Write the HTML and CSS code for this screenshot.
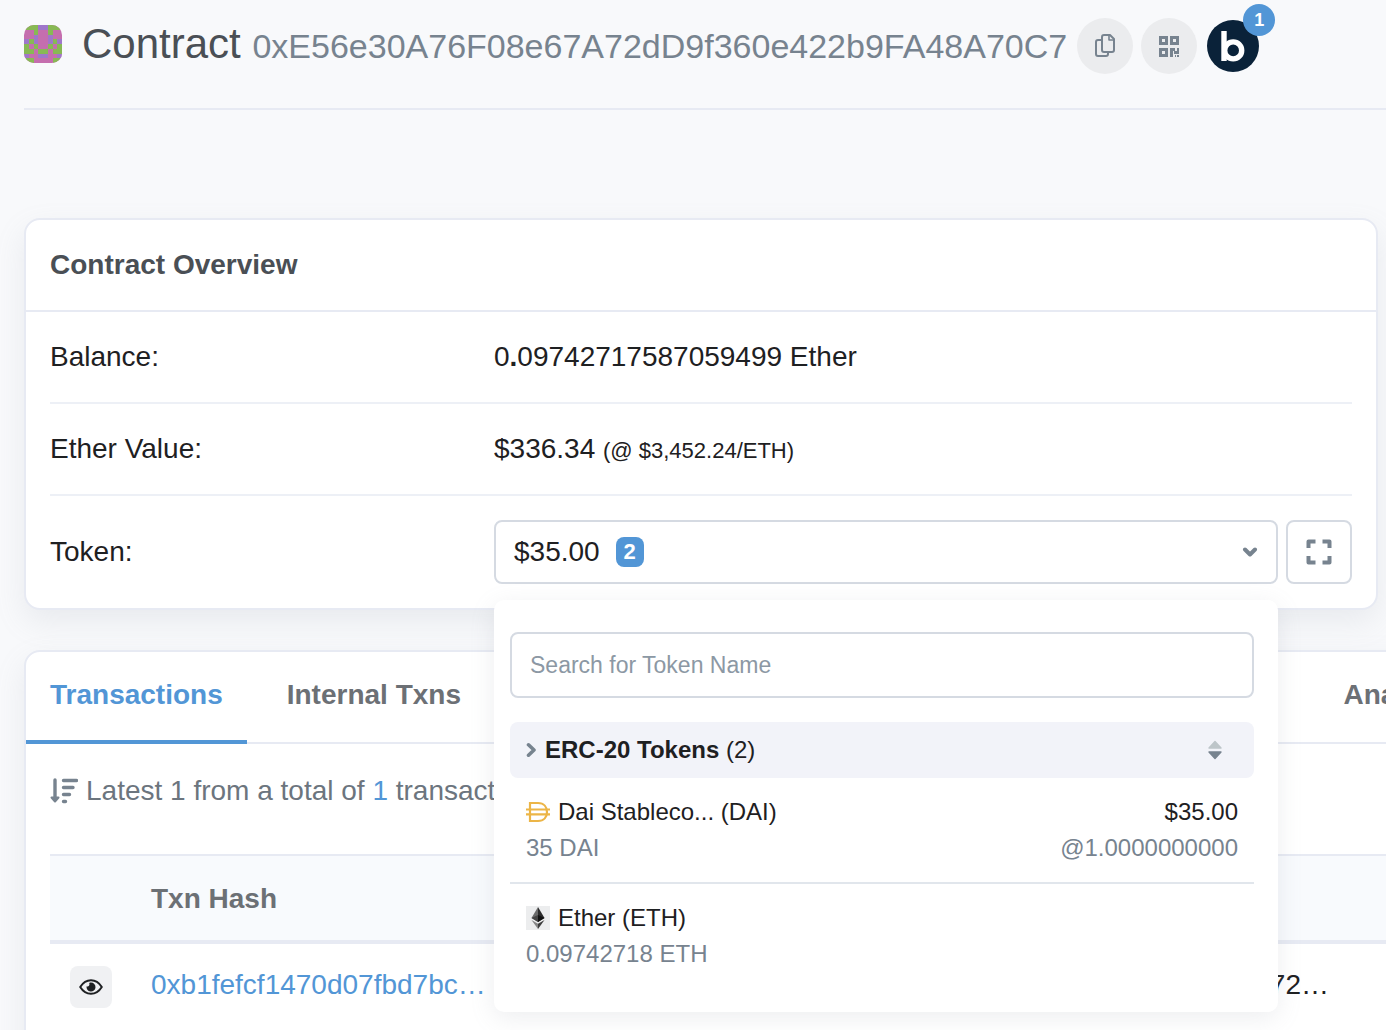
FILE: index.html
```
<!DOCTYPE html>
<html lang="en">
<head>
<meta charset="utf-8">
<meta name="viewport" content="width=device-width, initial-scale=1">
<title>Contract Address</title>
<link rel="stylesheet" href="styles.css">
</head>
<body>
<main class="page">
  <header class="page-header">
    <div class="title-group">
      <svg class="avatar" viewBox="0 0 8 8" shape-rendering="crispEdges" aria-hidden="true">
        <rect width="8" height="8" fill="#c56eae"/>
        <path fill="#88b954" d="M0 0h3v1H0zM5 0h3v1H5zM2 1h1v1H2zM5 1h1v1H5zM1 3h1v1H1zM6 3h1v1H6zM0 4h1v1H0zM2 4h1v1H2zM5 4h1v1H5zM7 4h1v1H7zM0 5h2v1H0zM3 5h2v1H3zM6 5h2v1H6zM0 7h2v1H0zM6 7h2v1H6z"/>
        <path fill="#9f77ca" d="M3 0h2v1H3zM2 2h1v2H2zM5 2h1v2H5zM0 3h1v1H0zM7 3h1v1H7zM0 6h1v1H0zM7 6h1v1H7zM3 6h2v1H3z"/>
      </svg>
      <h1 class="title">Contract <span class="address">0xE56e30A76F08e67A72dD9f360e422b9FA48A70C7</span></h1>
    </div>
    <div class="header-actions">
      <button class="round-btn" type="button" aria-label="Copy address">
        <svg width="20" height="24" viewBox="0 0 20 24" fill="none" stroke="#77838f" stroke-width="2" stroke-linejoin="round">
          <path d="M6 6H3a2 2 0 0 0-2 2v12a2 2 0 0 0 2 2h8a2 2 0 0 0 2-2v-2"/>
          <path d="M9 1h6l4 4v11a2 2 0 0 1-2 2H9a2 2 0 0 1-2-2V3a2 2 0 0 1 2-2z"/>
          <path d="M14 1v5h5" stroke-width="1.6"/>
        </svg>
      </button>
      <button class="round-btn" type="button" aria-label="Show QR code">
        <svg width="20" height="21" viewBox="0 0 20 21" fill="#77838f">
          <path fill-rule="evenodd" d="M0 0h9v9H0zM3 3v3h3V3zM11 0h9v9h-9zM14 3v3h3V3zM0 12h9v9H0zM3 15v3h3v-3z"/>
          <path d="M11 12h5v3h2v-3h2v6h-5v-3h-1v6h-3zM16 19h1v2h-1zM18 19h2v2h-2z"/>
        </svg>
      </button>
      <a class="brand" href="#" aria-label="Blockscan">
        <svg width="52" height="52" viewBox="0 0 52 52">
          <circle cx="26" cy="26" r="26" fill="#0a2239"/>
          <path d="M17 11v30" stroke="#fff" stroke-width="5.4"/>
          <circle cx="26.200" cy="30.400" r="8.500" fill="none" stroke="#fff" stroke-width="5.4"/>
        </svg>
        <span class="brand-count">1</span>
      </a>
    </div>
  </header>

  <section class="card overview">
    <h2 class="card-title">Contract Overview</h2>
    <dl class="facts">
      <div class="fact">
        <dt>Balance:</dt>
        <dd>0<b>.</b>09742717587059499 Ether</dd>
      </div>
      <div class="fact">
        <dt>Ether Value:</dt>
        <dd>$336.34 <small>(@ $3,452.24/ETH)</small></dd>
      </div>
      <div class="fact">
        <dt>Token:</dt>
        <dd class="token-controls">
          <div class="token-picker">
            <button class="token-btn" type="button" aria-haspopup="true" aria-expanded="true">
              <span>$35.00</span>
              <span class="badge">2</span>
              <svg class="caret" width="16" height="10" viewBox="0 0 16 10" fill="none" stroke="#77838f" stroke-width="4" stroke-linecap="round" stroke-linejoin="round"><path d="M3 2.500l5 5 5-5"/></svg>
            </button>
            <div class="token-menu">
              <input class="search" type="text" placeholder="Search for Token Name" aria-label="Search for Token Name">
              <div class="group-head">
                <svg width="11" height="16" viewBox="0 0 11 16" fill="none" stroke="#77838f" stroke-width="3.6" stroke-linecap="round" stroke-linejoin="round"><path d="M2.500 2.800l5.500 5.200-5.500 5.200"/></svg>
                <span><strong>ERC-20 Tokens</strong> (2)</span>
                <button class="sort-btn" type="button" aria-label="Sort tokens">
                  <svg width="14" height="20" viewBox="0 0 14 20" stroke-linejoin="round" stroke-width="1.4"><path d="M7 1.500l6 6.500H1z" fill="#bdc5c9" stroke="#bdc5c9"/><path d="M7 18.500l6-6.500H1z" fill="#77838f" stroke="#77838f"/></svg>
                </button>
              </div>
              <ul class="tokens">
                <li>
                  <a class="token" href="#">
                    <span class="token-line">
                      <span class="token-name">
                        <svg width="24" height="24" viewBox="0 0 24 24" fill="none" stroke="#ecb547" stroke-width="2.2"><path d="M4 3h8c6 0 9 4 9 9s-3 9-9 9H4z"/><path d="M0 9.500h24M0 14.300h24"/></svg>
                        Dai Stableco... (DAI)
                      </span>
                      <span>$35.00</span>
                    </span>
                    <span class="token-line muted"><span>35 DAI</span><span>@1.0000000000</span></span>
                  </a>
                </li>
                <li>
                  <a class="token" href="#">
                    <span class="token-line">
                      <span class="token-name">
                        <svg width="24" height="24" viewBox="0 0 24 24"><rect width="24" height="24" fill="#ecedee"/><path d="M12 1L5.500 12 12 16z" fill="#6b6b6b"/><path d="M12 1l6.500 11L12 16z" fill="#2b2b2b"/><path d="M12 9l-6.500 3L12 16z" fill="#444"/><path d="M12 9l6.500 3L12 16z" fill="#111"/><path d="M5.500 14L12 17.700V23z" fill="#858585"/><path d="M18.500 14L12 17.700V23z" fill="#3d3d3d"/></svg>
                        Ether (ETH)
                      </span>
                    </span>
                    <span class="token-line muted"><span>0.09742718 ETH</span></span>
                  </a>
                </li>
              </ul>
            </div>
          </div>
          <button class="expand-btn" type="button" aria-label="View all holdings">
            <svg width="26" height="26" viewBox="0 0 26 26" fill="none" stroke="#77838f" stroke-width="4" stroke-linejoin="round"><path d="M2.500 9V2.500h7M16.500 2.500h7V9M23.500 17v6.500h-7M9.500 23.500h-7V17"/></svg>
          </button>
        </dd>
      </div>
    </dl>
  </section>

  <section class="card activity">
    <nav class="tabs">
      <a class="tab active" href="#">Transactions</a>
      <a class="tab" href="#">Internal Txns</a>
      <a class="tab last" href="#">Analytics</a>
    </nav>
    <div class="activity-body">
      <p class="summary">
        <svg width="28" height="26" viewBox="0 0 28 26" fill="none" stroke="#77838f" stroke-width="3.4" stroke-linecap="round"><path d="M5 2v18"/><path d="M1.500 19.500h7L5 23.500z" fill="#77838f" stroke-width="2" stroke-linejoin="round"/><path d="M13.500 2.500h13M13.500 9.500h9.500M13.500 16.500h6M13.500 23.500h2"/></svg>
        <span>Latest 1 from a total of <a href="#">1</a> transactions</span>
      </p>
      <table class="txns">
        <thead>
          <tr><th class="col-view"></th><th class="col-hash">Txn Hash</th><th class="col-from"></th><th></th></tr>
        </thead>
        <tbody>
          <tr>
            <td class="col-view"><button class="eye-btn" type="button" aria-label="Preview transaction">
              <svg width="24" height="16" viewBox="0 0 24 16"><path d="M1.200 8C4 3.500 7.500 1.200 12 1.200S20 3.500 22.800 8C20 12.500 16.500 14.800 12 14.800S4 12.500 1.200 8z" fill="none" stroke="#1e2022" stroke-width="2" stroke-linejoin="round"/><path d="M12 3.600a4.500 4.500 0 1 1-4.400 3.600c1.600.9 3.600-.9 2.600-3.200.6-.3 1.200-.4 1.800-.4z" fill="#1e2022"/></svg>
            </button></td>
            <td><a href="#">0xb1fefcf1470d07fbd7bc…</a></td>
            <td class="col-from">0x31a6ab72…</td>
            <td></td>
          </tr>
        </tbody>
      </table>
    </div>
  </section>
</main>
</body>
</html>
```
FILE: styles.css
```
* { box-sizing: border-box; }

body {
  margin: 0;
  background: #f8f9fb;
  color: #1e2022;
  font: 28px/42px "Liberation Sans", Arial, sans-serif;
}

button, input { font: inherit; color: inherit; margin: 0; }
button { padding: 0; border: 0; background: none; cursor: pointer; }
a { color: #5296d6; text-decoration: none; }
svg { display: block; flex: none; }

.page {
  min-height: 100vh;
  padding: 0 8px 0 24px;
  overflow: hidden;
}

/* Header */
.page-header {
  display: flex;
  align-items: flex-start;
  gap: 10px;
  margin-right: -8px;
  padding: 18px 0 34px;
  border-bottom: 2px solid #e7eaf3;
}
.title-group {
  display: flex;
  align-items: center;
  gap: 20px;
}
.avatar {
  width: 38px;
  height: 38px;
  border-radius: 10px;
}
.title {
  margin: 0;
  color: #4a4f55;
  font-size: 42px;
  font-weight: 400;
  line-height: 52px;
  white-space: nowrap;
}
.address {
  color: #77838f;
  font-size: 34px;
  line-height: 1;
}
.header-actions {
  display: flex;
  align-items: center;
  gap: 8px;
}
.round-btn {
  display: grid;
  place-items: center;
  width: 56px;
  height: 56px;
  border-radius: 50%;
  background: #ebecee;
}
.brand {
  position: relative;
  margin-left: 2px;
}
.brand-count {
  position: absolute;
  top: -16px;
  right: -16px;
  width: 32px;
  border-radius: 50%;
  background: #5296d6;
  color: #fff;
  font-size: 18px;
  font-weight: 700;
  line-height: 32px;
  text-align: center;
}

/* Cards */
.card {
  border: 2px solid #e7eaf3;
  border-radius: 16px;
  background: #fff;
  box-shadow: 0 12px 30px rgba(140, 152, 164, 0.14);
}
.overview {
  position: relative;
  z-index: 1;
  margin-top: 108px;
}
.card-title {
  margin: 0;
  padding: 24px;
  border-bottom: 2px solid #e7eaf3;
  color: #4a4f55;
  font-size: 28px;
}
.facts {
  margin: 0;
  padding: 0 24px;
}
.fact {
  display: grid;
  grid-template-columns: 444px 1fr;
  align-items: center;
  padding: 24px 0;
}
.fact + .fact { border-top: 2px solid #edf0f6; }
.fact dd { margin: 0; }
.fact small {
  font-size: 22px;
  line-height: 1;
}

/* Token picker */
.token-controls {
  display: flex;
  gap: 8px;
}
.token-picker {
  position: relative;
  flex: 1;
}
.token-btn, .expand-btn {
  border: 2px solid #d5dae2;
  border-radius: 8px;
  height: 64px;
}
.token-btn {
  display: flex;
  align-items: center;
  gap: 16px;
  width: 100%;
  padding: 0 18px;
}
.badge {
  width: 28px;
  border-radius: 8px;
  background: #5296d6;
  color: #fff;
  font-size: 22px;
  font-weight: 700;
  line-height: 30px;
}
.caret { margin-left: auto; }
.expand-btn {
  display: grid;
  place-items: center;
  width: 66px;
}
.token-menu {
  position: absolute;
  top: calc(100% + 16px);
  left: 0;
  right: 0;
  padding: 32px 24px 24px 16px;
  border-radius: 10px;
  background: #fff;
  box-shadow: 0 6px 24px rgba(140, 152, 164, 0.16);
  font-size: 24px;
  line-height: 36px;
}
.search {
  display: block;
  width: 100%;
  height: 66px;
  padding: 0 18px;
  border: 2px solid #d5dae2;
  border-radius: 8px;
  background: #fff;
  font-size: 23px;
}
.search::placeholder { color: #8c98a4; opacity: 1; }
.group-head {
  display: flex;
  align-items: center;
  gap: 8px;
  margin-top: 24px;
  padding: 10px 32px 10px 16px;
  border-radius: 8px;
  background: #f2f3f9;
}
.sort-btn { margin-left: auto; }
.tokens {
  margin: 0;
  padding: 0;
  list-style: none;
}
.tokens li + li { border-top: 2px solid #e1e6ec; }
.token {
  display: block;
  padding: 16px;
  color: #1e2022;
}
.token-line {
  display: flex;
  justify-content: space-between;
}
.token-name {
  display: flex;
  align-items: center;
  gap: 8px;
}
.muted { color: #77838f; }

/* Transactions */
.activity {
  margin: 40px -116px 0 0;
}
.tabs {
  display: flex;
  gap: 16px;
  border-bottom: 2px solid #e7eaf3;
}
.tab {
  margin-bottom: -2px;
  padding: 22px 24px 24px;
  border-bottom: 4px solid transparent;
  color: #6c7075;
  font-weight: 700;
}
.tab.active {
  border-color: #5296d6;
  color: #5296d6;
}
.tab.last { margin-left: auto; }
.activity-body { padding: 26px 24px; }
.summary {
  display: flex;
  align-items: center;
  gap: 8px;
  margin: 0 0 42px;
  color: #6c757e;
}
.txns {
  width: 100%;
  table-layout: fixed;
  border-collapse: separate;
  border-spacing: 0;
  text-align: left;
}
.txns th {
  padding: 22px 0 20px;
  border-top: 2px solid #e7eaf3;
  border-bottom: 4px solid #e7eaf3;
  background: #f8fafd;
  color: #6c7075;
}
.txns td {
  padding: 20px 0;
  vertical-align: top;
}
.txns .col-view { width: 101px; }
.txns td.col-view { padding: 22px 20px; }
.txns .col-hash { width: 400px; }
.txns .col-from { width: 778px; }
.txns td.col-from { text-align: right; }
.eye-btn {
  display: grid;
  place-items: center;
  width: 42px;
  height: 42px;
  border-radius: 8px;
  background: #f0f1f3;
}
```
